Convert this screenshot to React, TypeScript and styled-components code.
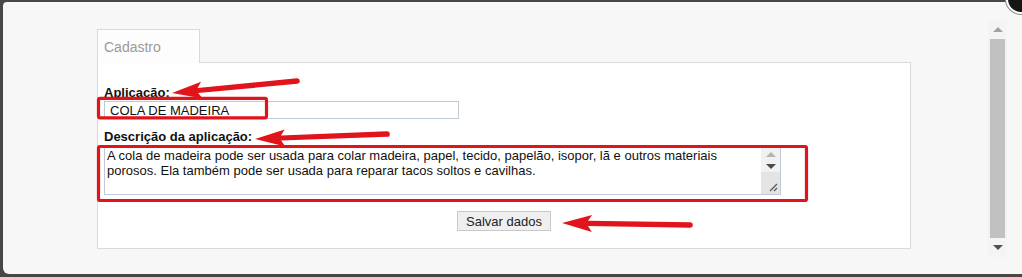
import React from "react";
import styled, { createGlobalStyle } from "styled-components";

const GlobalStyle = createGlobalStyle`
  html, body {
    margin: 0;
    padding: 0;
    background: #474747;
    overflow: hidden;
  }
  body {
    font-family: "Liberation Sans", Arial, sans-serif;
  }
`;

const Dialog = styled.div`
  position: relative;
  display: flex;
  align-items: flex-start;
  box-sizing: border-box;
  width: 1040px;
  height: 272px;
  margin: 2px 0 0 3px;
  padding: 27px 0 0 94px;
  background: #f7f7f7;
  border-radius: 4px 0 0 6px;
`;

const CloseButton = styled.div`
  position: absolute;
  top: -18px;
  left: 1003px;
  width: 30px;
  height: 30px;
  box-sizing: border-box;
  border-radius: 50%;
  background: #151515;
  border: 2px solid #ffffff;
  box-shadow: 0 0 0 1px #8a8a8a;
`;

const Main = styled.div`
  width: 814px;
  display: flex;
  flex-direction: column;
`;

const Tabs = styled.div`
  display: flex;
`;

const Tab = styled.div`
  position: relative;
  z-index: 1;
  box-sizing: border-box;
  width: 103px;
  height: 34px;
  margin-bottom: -1px;
  padding: 9px 0 0 6px;
  background: #fdfdfd;
  border: 1px solid #dadada;
  border-bottom: none;
  color: #9a9a9a;
  font-size: 14px;
  line-height: 16px;
`;

const Panel = styled.div`
  box-sizing: border-box;
  height: 187px;
  padding: 22px 6px 0 6px;
  background: #ffffff;
  border: 1px solid #dadada;
  display: flex;
  flex-direction: column;
  align-items: flex-start;
`;

const Label = styled.label<{ $gap?: number }>`
  display: block;
  margin-top: ${(p) => p.$gap ?? 0}px;
  font-size: 13px;
  line-height: 15px;
  font-weight: bold;
  color: #111;
`;

const TextInput = styled.input`
  box-sizing: border-box;
  width: 355px;
  height: 18px;
  margin: 1px 0 0 0;
  padding: 0 5px;
  border: 1px solid #bfcad5;
  font-family: "Liberation Sans", Arial, sans-serif;
  font-size: 13px;
  color: #111;
  background: #fff;
  outline: none;
`;

const AreaBox = styled.div`
  box-sizing: border-box;
  display: flex;
  width: 677px;
  height: 48px;
  margin-top: 3px;
  border: 1px solid #bfcad5;
  background: #fff;
`;

const Area = styled.textarea`
  flex: 1;
  box-sizing: border-box;
  height: 100%;
  margin: 0;
  padding: 1px 2px 0 2px;
  border: none;
  outline: none;
  resize: none;
  overflow: hidden;
  font-family: "Liberation Sans", Arial, sans-serif;
  font-size: 13px;
  line-height: 14.6px;
  color: #111;
  background: transparent;
`;

const AreaScroll = styled.div`
  width: 19px;
  display: flex;
  flex-direction: column;
  background: #f1f1f1;
`;

const ScrollBtn = styled.div<{ $h: number; $bg?: string }>`
  height: ${(p) => p.$h}px;
  display: flex;
  align-items: center;
  justify-content: center;
  background: ${(p) => p.$bg ?? "transparent"};
`;

const Triangle = styled.span<{ $up?: boolean; $color: string }>`
  width: 0;
  height: 0;
  border-left: 5px solid transparent;
  border-right: 5px solid transparent;
  ${(p) =>
    p.$up
      ? `border-bottom: 5px solid ${p.$color};`
      : `border-top: 5px solid ${p.$color};`}
`;

const Grip = styled.div`
  flex: 1;
  display: flex;
  align-items: flex-end;
  justify-content: flex-end;
  padding: 0 2px 2px 0;
  background: #e4e4e4;
`;

const Actions = styled.div`
  align-self: stretch;
  display: flex;
  justify-content: center;
  margin-top: 16px;
`;

const Button = styled.button`
  box-sizing: border-box;
  height: 20px;
  padding: 0 8px;
  border: 1px solid #c9c9c9;
  border-radius: 0;
  background: #efefef;
  font-family: "Liberation Sans", Arial, sans-serif;
  font-size: 13px;
  color: #222;
  cursor: pointer;
`;

const PageScroll = styled.div`
  width: 19px;
  height: 237px;
  margin: -9px 0 0 77px;
  display: flex;
  flex-direction: column;
  background: #f1f1f1;
`;

const Thumb = styled.div`
  flex: 1;
  margin: 0 2px;
  background: #c1c1c1;
`;

const Marks = styled.svg`
  position: fixed;
  top: 0;
  left: 0;
  pointer-events: none;
`;

const RED = "#e2141b";

// tapered arrow: tip at (tx,ty), tail at (ex,ey)
const arrowPath = (tx: number, ty: number, ex: number, ey: number) => {
  const dx = ex - tx;
  const dy = ey - ty;
  const len = Math.hypot(dx, dy);
  const ux = dx / len;
  const uy = dy / len;
  const nx = -uy;
  const ny = ux;
  const head = 30;
  const half = 8.5;
  const bx = tx + ux * head;
  const by = ty + uy * head;
  const p = (x: number, y: number) => `${x.toFixed(1)},${y.toFixed(1)}`;
  const w1 = 2.6;
  const w2 = 2.8;
  return [
    `M${p(tx, ty)}`,
    `L${p(bx + nx * half, by + ny * half)}`,
    `L${p(bx - ux * 4 + nx * w1, by - uy * 4 + ny * w1)}`,
    `L${p(ex + nx * w2, ey + ny * w2)}`,
    `A${w2},${w2} 0 0 0 ${p(ex - nx * w2, ey - ny * w2)}`,
    `L${p(bx - ux * 4 - nx * w1, by - uy * 4 - ny * w1)}`,
    `L${p(bx - nx * half, by - ny * half)}`,
    "Z",
  ].join(" ");
};

const description =
  "A cola de madeira pode ser usada para colar madeira, papel, tecido, papelão, isopor, lã e outros materiais porosos. Ela também pode ser usada para reparar tacos soltos e cavilhas.\n\nUma das vantagens da cola de madeira é a sua secagem rápida.";

export default function App() {
  return (
    <>
      <GlobalStyle />
      <Dialog>
        <CloseButton />
        <Main>
          <Tabs>
            <Tab>Cadastro</Tab>
          </Tabs>
          <Panel>
            <Label>Aplicação:</Label>
            <TextInput defaultValue="COLA DE MADEIRA" />
            <Label $gap={10}>Descrição da aplicação:</Label>
            <AreaBox>
              <Area readOnly defaultValue={description} />
              <AreaScroll>
                <ScrollBtn $h={12}>
                  <Triangle $up $color="#b4b4b4" />
                </ScrollBtn>
                <ScrollBtn $h={12}>
                  <Triangle $color="#4a4a4a" />
                </ScrollBtn>
                <Grip>
                  <svg width="9" height="9" viewBox="0 0 9 9">
                    <path d="M1 8 L8 1 M5 8 L8 5" stroke="#555" strokeWidth="1.2" />
                  </svg>
                </Grip>
              </AreaScroll>
            </AreaBox>
            <Actions>
              <Button type="button">Salvar dados</Button>
            </Actions>
          </Panel>
        </Main>
        <PageScroll>
          <ScrollBtn $h={19} $bg="#f4f4f4">
            <Triangle $up $color="#a3a3a3" />
          </ScrollBtn>
          <Thumb />
          <ScrollBtn $h={19} $bg="#f4f4f4">
            <Triangle $color="#505050" />
          </ScrollBtn>
        </PageScroll>
      </Dialog>
      <Marks width="1022" height="277" viewBox="0 0 1022 277">
        <rect x="98.5" y="98.3" width="168" height="19.5" rx="1.5" fill="none" stroke={RED} strokeWidth="3.2" />
        <rect x="98.5" y="146.5" width="708" height="54" rx="1.5" fill="none" stroke={RED} strokeWidth="3.2" />
        <path d={arrowPath(172, 93, 297, 81)} fill={RED} />
        <path d={arrowPath(255, 139, 387, 134)} fill={RED} />
        <path d={arrowPath(562, 223, 690, 225)} fill={RED} />
      </Marks>
    </>
  );
}
